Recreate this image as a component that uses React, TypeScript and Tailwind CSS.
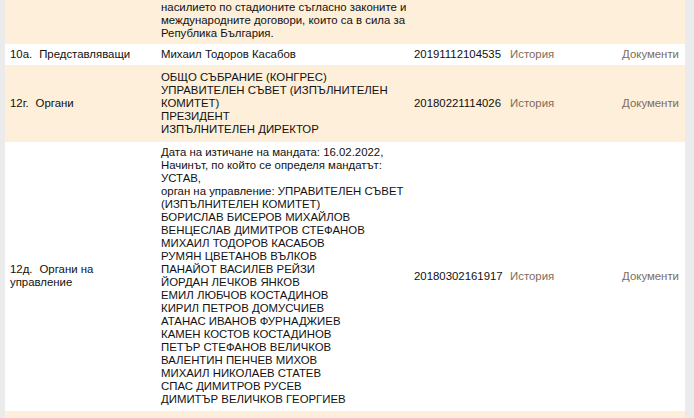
const rows = [
  {
    tone: 'orange',
    pad: 'pt-[1px] pb-1',
    label: null as null | { no: string; text: React.ReactNode },
    value: ['насилието по стадионите съгласно законите и', 'международните договори, които са в сила за', 'Република България.'],
    num: '',
    links: false,
  },
  {
    tone: 'white',
    pad: 'py-1',
    label: { no: '10а.', text: 'Представляващи' },
    value: ['Михаил Тодоров Касабов'],
    num: '20191112104535',
    links: true,
  },
  {
    tone: 'orange',
    pad: 'py-[6px]',
    label: { no: '12г.', text: 'Органи' },
    value: ['ОБЩО СЪБРАНИЕ (КОНГРЕС)', 'УПРАВИТЕЛЕН СЪВЕТ (ИЗПЪЛНИТЕЛЕН', 'КОМИТЕТ)', 'ПРЕЗИДЕНТ', 'ИЗПЪЛНИТЕЛЕН ДИРЕКТОР'],
    num: '20180221114026',
    links: true,
  },
  {
    tone: 'white',
    pad: 'pt-1 pb-[5px]',
    label: { no: '12д.', text: <>Органи на<br />управление</> },
    value: [
      'Дата на изтичане на мандата: 16.02.2022,',
      'Начинът, по който се определя мандатът:',
      'УСТАВ,',
      'орган на управление: УПРАВИТЕЛЕН СЪВЕТ',
      '(ИЗПЪЛНИТЕЛЕН КОМИТЕТ)',
      'БОРИСЛАВ БИСЕРОВ МИХАЙЛОВ',
      'ВЕНЦЕСЛАВ ДИМИТРОВ СТЕФАНОВ',
      'МИХАИЛ ТОДОРОВ КАСАБОВ',
      'РУМЯН ЦВЕТАНОВ ВЪЛКОВ',
      'ПАНАЙОТ ВАСИЛЕВ РЕЙЗИ',
      'ЙОРДАН ЛЕЧКОВ ЯНКОВ',
      'ЕМИЛ ЛЮБЧОВ КОСТАДИНОВ',
      'КИРИЛ ПЕТРОВ ДОМУСЧИЕВ',
      'АТАНАС ИВАНОВ ФУРНАДЖИЕВ',
      'КАМЕН КОСТОВ КОСТАДИНОВ',
      'ПЕТЪР СТЕФАНОВ ВЕЛИЧКОВ',
      'ВАЛЕНТИН ПЕНЧЕВ МИХОВ',
      'МИХАИЛ НИКОЛАЕВ СТАТЕВ',
      'СПАС ДИМИТРОВ РУСЕВ',
      'ДИМИТЪР ВЕЛИЧКОВ ГЕОРГИЕВ',
    ],
    num: '20180302161917',
    links: true,
  },
  {
    tone: 'orange',
    pad: 'py-1',
    label: null,
    value: ['\u00a0'],
    num: '',
    links: false,
  },
];

export default function App() {
  return (
    <div className="flex h-[418px] w-[694px] overflow-hidden bg-[#ebebeb] font-['Liberation_Sans',Arial,sans-serif] text-[11.4px] leading-[13px] text-[#111]">
      {/* left gutter */}
      <div className="w-[5px] shrink-0" />

      <div className="flex w-[680px] shrink-0 flex-col">
        {rows.map((r, i) => (
          <div
            key={i}
            className={`grid shrink-0 grid-cols-[151px_253px_96px_1fr_auto] items-center ${
              r.tone === 'orange' ? 'bg-[#fdefd9]' : 'bg-white'
            }`}
          >
            <div className={`pl-[5px] pr-1 ${r.pad}`}>
              {r.label && (
                <>
                  <span className="mr-[7px]">{r.label.no}</span>
                  {r.label.text}
                </>
              )}
            </div>
            <div className={`whitespace-nowrap px-[5px] ${r.pad}`}>
              {r.value.map((line, j) => (
                <div key={j}>{line}</div>
              ))}
            </div>
            <div className="px-[5px]">{r.num}</div>
            <div className="px-[5px] text-[#7d6c5b]">{r.links ? 'История' : ''}</div>
            <div className="pr-[6px] text-right text-[#7d6c5b]">{r.links ? 'Документи' : ''}</div>
          </div>
        ))}
      </div>

      {/* right gutter */}
      <div className="flex-1" />
    </div>
  );
}
